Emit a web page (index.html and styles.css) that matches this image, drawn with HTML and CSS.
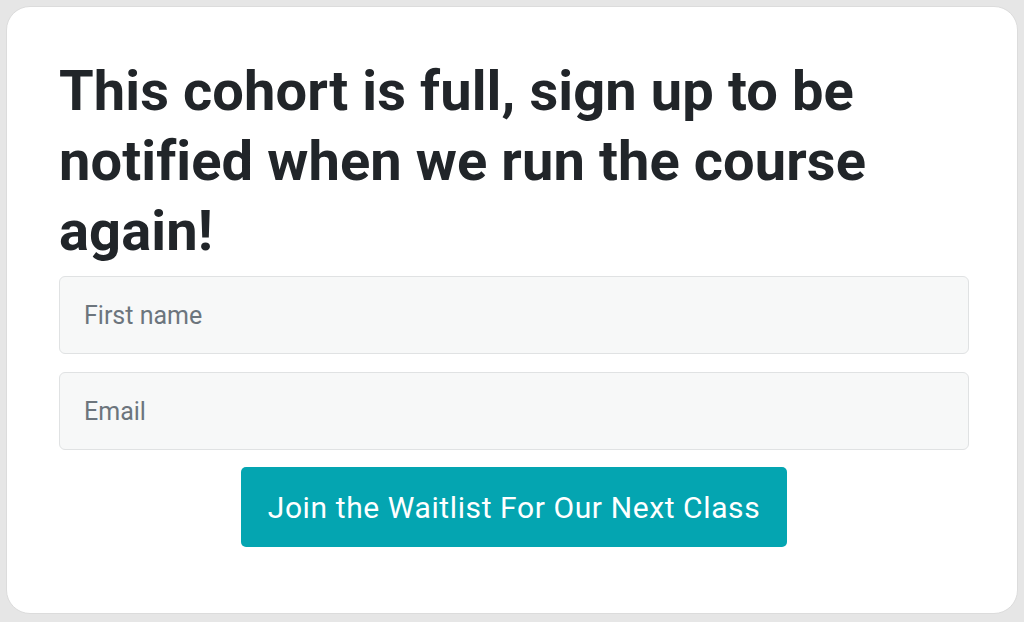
FILE: index.html
```html
<!DOCTYPE html>
<html lang="en">
<head>
<meta charset="UTF-8">
<meta name="viewport" content="width=device-width, initial-scale=1.0">
<title>Waitlist</title>
<link rel="stylesheet" href="styles.css">
</head>
<body>
    <div class="card">
        <h1 class="title">This cohort is full, sign up to be notified when we run the course again!</h1>
        <form class="waitlist" onsubmit="return false">
            <input type="text" class="field" placeholder="First name">
            <input type="email" class="field" placeholder="Email">
            <button type="submit" class="btn-join">Join the Waitlist For Our Next Class</button>
        </form>
    </div>
</body>
</html>
```

FILE: styles.css
```css
body {
    margin: 0;
    padding: 6px;
    background: #e6e6e6;
    font-family: Roboto, "Liberation Sans", sans-serif;
}
.card {
    height: 608px;
    box-sizing: border-box;
    background: #fff;
    border: 1px solid #dcdcdc;
    border-radius: 24px;
    padding: 49px 49px 0 52px;
}
.title {
    margin: 0 0 10px;
    font-size: 56px;
    line-height: 70px;
    font-weight: 700;
    letter-spacing: 0.1px;
    color: #212529;
    max-width: 860px;
}
.waitlist {
    display: flex;
    flex-direction: column;
    gap: 18px;
    width: 910px;
}
.field {
    height: 78px;
    box-sizing: border-box;
    padding: 0 24px;
    background: #f7f8f8;
    border: 1px solid #e0e2e3;
    border-radius: 6px;
    font-family: inherit;
    font-size: 25px;
    color: #495057;
}
.field::placeholder {
    color: #6c757d;
}
/* botão centralizado abaixo dos campos */
.btn-join {
    align-self: center;
    margin-top: -1px;
    width: 546px;
    height: 80px;
    border: none;
    border-radius: 5px;
    background: #04a5b1;
    color: #fff;
    font-family: inherit;
    font-size: 30px;
    letter-spacing: 0.6px;
    cursor: pointer;
}
```
